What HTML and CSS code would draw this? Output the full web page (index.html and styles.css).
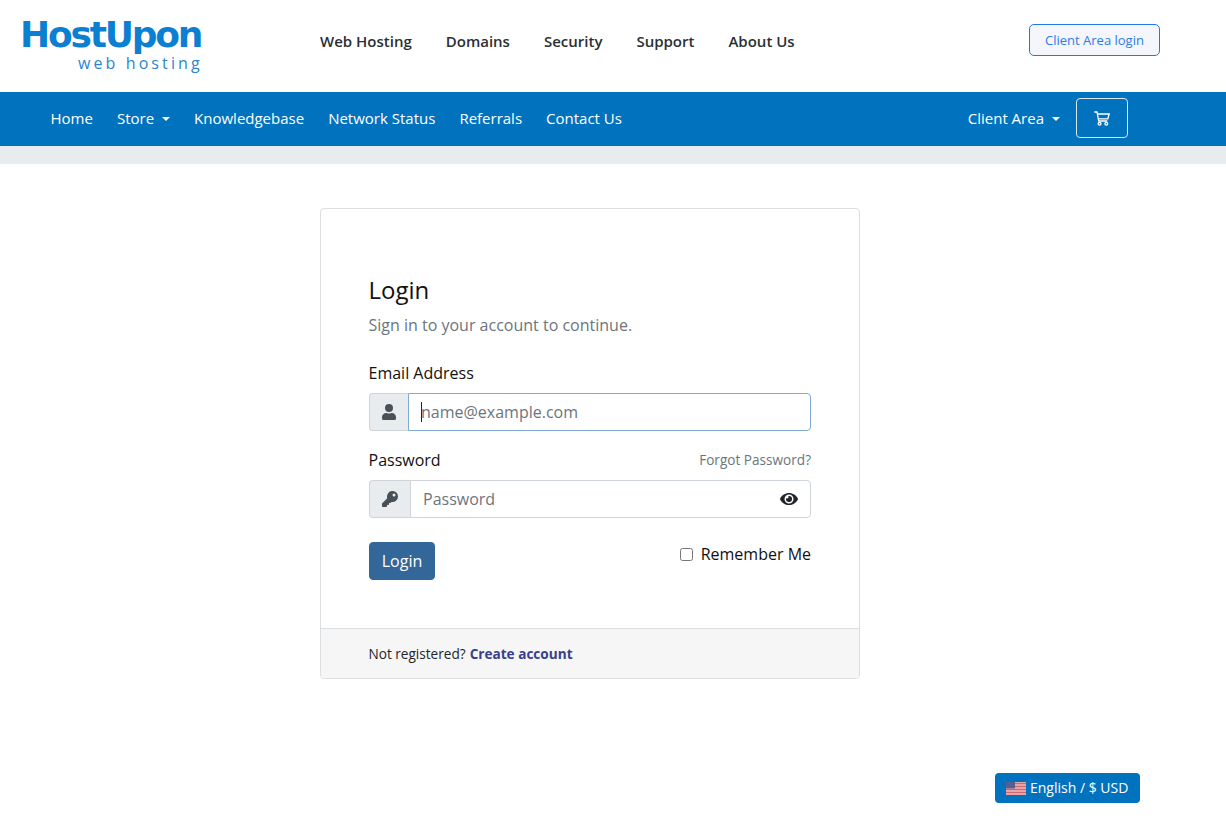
FILE: index.html
```html
<!DOCTYPE html>
<html lang="en">
<head>
<meta charset="utf-8">
<title>HostUpon - Login</title>
<link rel="stylesheet" href="styles.css">
</head>
<body>
<header class="top">
  <a class="logo" href="#"><span class="logo-name">HostUpon</span><span class="logo-sub">web hosting</span></a>
  <nav class="top-nav">
    <a href="#">Web Hosting</a><a href="#">Domains</a><a href="#">Security</a><a href="#">Support</a><a href="#">About Us</a>
  </nav>
  <a class="client-btn" href="#">Client Area login</a>
</header>
<nav class="bar">
  <div class="bar-left">
    <a href="#">Home</a>
    <a href="#" class="caret">Store</a>
    <a href="#">Knowledgebase</a>
    <a href="#">Network Status</a>
    <a href="#">Referrals</a>
    <a href="#">Contact Us</a>
  </div>
  <div class="bar-right">
    <a href="#" class="caret">Client Area</a>
    <a href="#" class="cart" aria-label="Cart">
      <svg width="16" height="15" viewBox="0 0 16 15" fill="none" stroke="#fff" stroke-width="1.3"><path d="M0.3 1H3l1.7 9h8.6"/><path d="M3.4 3H15.2l-1.4 4.8H4.3"/><circle cx="5.6" cy="12.8" r="1.4"/><circle cx="12.3" cy="12.8" r="1.4"/></svg>
    </a>
  </div>
</nav>
<div class="strip"></div>
<main class="main">
  <section class="card">
    <div class="card-body">
      <h1>Login</h1>
      <p class="lead">Sign in to your account to continue.</p>
      <label class="label email-label" for="email">Email Address</label>
      <div class="group">
        <span class="addon addon-user">
          <svg width="14" height="16" viewBox="0 0 448 512" fill="#495057"><path d="M224 256a128 128 0 1 0 0-256 128 128 0 0 0 0 256zm90 32h-17a174 174 0 0 1-146 0h-17A134 134 0 0 0 0 422v42a48 48 0 0 0 48 48h352a48 48 0 0 0 48-48v-42a134 134 0 0 0-134-134z"/></svg>
        </span>
        <div class="field focus"><span class="cursor"></span><span class="ph">name@example.com</span></div>
      </div>
      <div class="pw-row">
        <label class="label" for="pw">Password</label>
        <a class="forgot" href="#">Forgot Password?</a>
      </div>
      <div class="group">
        <span class="addon addon-key">
          <svg width="16" height="16" viewBox="0 0 512 512" fill="#495057"><path d="M512 176a176 176 0 0 1-209 173l-24 27a24 24 0 0 1-18 8h-37v40a24 24 0 0 1-24 24h-40v40a24 24 0 0 1-24 24H24a24 24 0 0 1-24-24v-78a24 24 0 0 1 7-17l162-162A176 176 0 1 1 512 176zM336 128a48 48 0 1 0 96 0 48 48 0 0 0-96 0z"/></svg>
        </span>
        <div class="field plain">
          <span class="ph">Password</span>
          <svg class="eye" width="18" height="16" viewBox="0 0 576 512" fill="#212529"><path d="M572 241C518 136 410 64 288 64S58 136 4 241a32 32 0 0 0 0 29c54 105 162 177 284 177s230-72 284-177a32 32 0 0 0 0-29zM288 400a144 144 0 1 1 0-288 144 144 0 0 1 0 288zm0-240a95 95 0 0 0-25 4 48 48 0 0 1-67 67 96 96 0 1 0 92-71z"/></svg>
        </div>
      </div>
      <div class="actions">
        <button class="login" type="button">Login</button>
        <label class="remember"><input type="checkbox"><span>Remember Me</span></label>
      </div>
    </div>
    <div class="card-foot">Not registered? <a href="#">Create account</a></div>
  </section>
</main>
<footer class="foot">
  <a class="lang" href="#">
    <svg width="20" height="13" viewBox="0 0 20 13"><rect width="20" height="13" fill="#e8a3a8"/><path d="M0 1.5h20M0 4.5h20M0 7.5h20M0 10.5h20" stroke="#c96a72" stroke-width="1"/><rect width="9" height="6.5" fill="#56608f"/></svg>
    <span>English / $ USD</span>
  </a>
</footer>
</body>
</html>
```
FILE: styles.css
```css
* { box-sizing: border-box; }
html, body { margin: 0; padding: 0; }
body {
  font-family: "Open Sans", "Liberation Sans", sans-serif;
  font-size: 16px;
  line-height: 24px;
  color: #212529;
  background: #fff;
  height: 825px;
  overflow: hidden;
}
a { text-decoration: none; color: inherit; }

.top {
  height: 92px;
  display: flex;
  align-items: flex-start;
  padding: 0 66px 0 20px;
}
.logo {
  width: 300px;
  display: flex;
  flex-direction: column;
  color: #0b7fd1;
  padding-top: 18px;
}
.logo-name {
  font-family: "DejaVu Sans", "Liberation Sans", sans-serif;
  font-weight: 700;
  font-size: 36px;
  line-height: 34px;
  letter-spacing: -2.2px;
}
.logo-sub {
  font-size: 16px;
  line-height: 22px;
  letter-spacing: 3.1px;
  padding-left: 58px;
  color: #2b85d0;
}
.top-nav {
  display: flex;
  gap: 34px;
  flex: 1;
  font-size: 15px;
  font-weight: 600;
  color: #2a2f33;
  padding-top: 29px;
}
.client-btn {
  width: 131px;
  height: 32px;
  display: flex;
  align-items: center;
  justify-content: center;
  font-size: 13px;
  color: #2f7be6;
  background: #f4f6fb;
  border: 1px solid #2277e0;
  border-radius: 5px;
  margin-top: 24px;
}

.bar {
  height: 54px;
  background: #0172bd;
  color: #fff;
  display: flex;
  align-items: center;
  justify-content: space-between;
  padding: 0 98px 2px 50.5px;
  font-size: 15px;
}
.bar-left, .bar-right { display: flex; align-items: center; }
.bar-left { gap: 24px; }
.bar-right { gap: 16px; }
.caret::after {
  content: "";
  display: inline-block;
  margin-left: 8px;
  vertical-align: 3px;
  border-top: 4px solid #fff;
  border-left: 4px solid transparent;
  border-right: 4px solid transparent;
}
.cart {
  width: 52px;
  height: 40px;
  display: flex;
  align-items: center;
  justify-content: center;
  border: 1px solid #dbe8f3;
  border-radius: 4px;
}
.strip { height: 18px; background: #e9ecef; }

.main { display: flex; padding: 44px 0 0 320px; }
.card {
  width: 540px;
  height: 471px;
  border: 1px solid #dcdfe2;
  border-radius: 4px;
  display: flex;
  flex-direction: column;
  overflow: hidden;
}
.card-body { flex: 1; padding: 63px 48px 0 47.5px; }
h1 {
  margin: 0 0 4px;
  font-size: 24px;
  font-weight: 400;
  line-height: 36px;
  color: #111;
}
.lead {
  margin: 0;
  font-size: 16px;
  line-height: 26px;
  color: #6c757d;
}
.label { display: block; font-size: 16px; line-height: 24px; color: #111; }
.email-label { margin: 23px 0 8px; }
.group { display: flex; height: 38px; margin-left: 0.5px; }
.addon {
  display: flex;
  align-items: center;
  justify-content: center;
  background: #e9ecef;
  border: 1px solid #ced4da;
  border-right: 0;
  border-radius: 4px 0 0 4px;
}
.addon-user { width: 39px; }
.addon-key { width: 41px; }
.field {
  flex: 1;
  display: flex;
  align-items: center;
  justify-content: space-between;
  border: 1px solid #ced4da;
  border-radius: 0 4px 4px 0;
  padding: 0 12px;
  background: #fff;
}
.field.focus {
  border-color: #80a9d8;
  justify-content: flex-start;
}
.cursor { width: 1px; height: 20px; background: #212529; margin-right: -1px; }
.ph { color: #6c757d; font-size: 16px; }
.pw-row {
  display: flex;
  align-items: center;
  justify-content: space-between;
  margin: 17px 0 8px;
}
.forgot { font-size: 13.6px; color: #6c757d; }
.actions {
  display: flex;
  justify-content: space-between;
  align-items: flex-start;
  margin-top: 24px;
  margin-left: 0.5px;
}
.login {
  width: 66px;
  height: 38px;
  border: 1px solid #336699;
  border-radius: 4px;
  background: #336699;
  color: #fff;
  font: inherit;
  padding: 0;
}
.remember { display: flex; align-items: center; gap: 8px; color: #111; }
.remember input { width: 13px; height: 13px; margin: 0; }
.card-foot {
  height: 50px;
  background: #f6f6f6;
  border-top: 1px solid #dcdfe2;
  padding: 0 48px 0 47.5px;
  display: flex;
  align-items: center;
  gap: 4px;
  font-size: 13.6px;
  color: #212529;
}
.card-foot a { font-weight: 700; color: #36408f; }

.foot { display: flex; justify-content: flex-end; padding: 94px 86px 0 0; }
.lang {
  width: 145px;
  height: 30px;
  display: flex;
  align-items: center;
  gap: 4px;
  padding-left: 11px;
  background: #0172bd;
  color: #fff;
  border-radius: 4px;
  font-size: 14px;
}
```
